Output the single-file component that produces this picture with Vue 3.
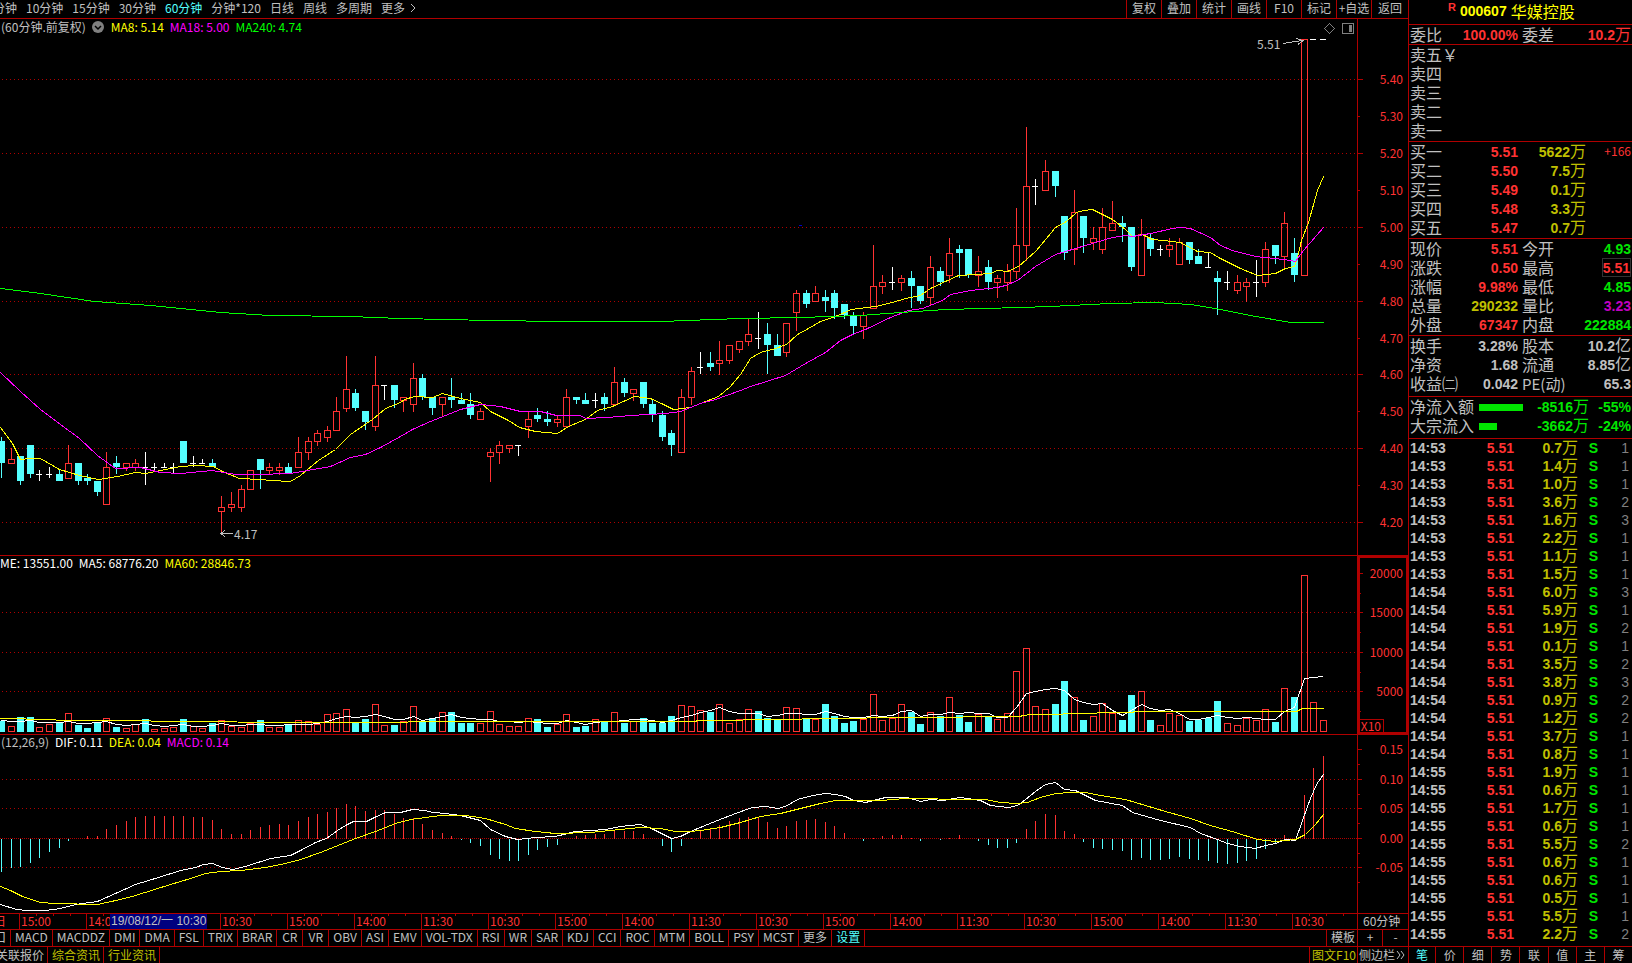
<script setup>
const periods = ['分钟', '10分钟', '15分钟', '30分钟', '60分钟', '分钟*120', '日线', '周线', '多周期']
const tools = ['复权', '叠加', '统计', '画线', 'F10', '标记', '+自选', '返回']
const indicators = ['MACD', 'MACDDZ', 'DMI', 'DMA', 'FSL', 'TRIX', 'BRAR', 'CR', 'VR', 'OBV', 'ASI', 'EMV', 'VOL-TDX', 'RSI', 'WR', 'SAR', 'KDJ', 'CCI', 'ROC', 'MTM', 'BOLL', 'PSY', 'MCST', '更多', '设置']
const timeCycle = ['15:00', '14:00', '11:30', '10:30']
const times = Array.from({ length: 20 }, (_, i) => timeCycle[i % 4])

// open, close, high, low in cents
const bars = `442 436 443 432|436 437 440 436|438 431 438 430|441 433 441 432|433 433 434 431|433 433 435 432|433 431 434 431|432 436 441 432|436 431 436 430|432 431 433 430|431 428 431 427|425 435 439 425|436 435 438 433|435 436 436 434|435 436 437 434|435 435 439 430|435 435 436 434|435 435 436 435|435 435 436 433|442 436 442 436|436 436 438 435|436 436 437 436|436 435 437 435|423 424 427 417|424 425 428 423|424 429 430 423|429 434 434 429|437 434 437 429|434 435 436 433|434 435 436 433|435 433 436 433|435 439 443 435|439 442 443 437|442 444 445 441|443 445 446 442|445 450 454 445|451 456 465 450|455 451 456 450|450 447 450 445|446 457 465 445|457 457 457 453|457 453 457 451|453 454 454 450|452 459 463 450|459 454 460 453|454 451 454 449|452 454 454 449|454 453 459 451|453 452 455 452|452 449 455 448|448 450 451 448|438 439 440 431|439 441 442 436|440 441 441 439|441 441 441 438|446 448 450 443|449 448 451 447|448 447 450 446|447 448 449 446|446 454 456 446|454 453 454 452|453 452 455 452|453 453 455 451|454 452 455 450|452 458 462 452|458 455 459 454|455 456 456 453|458 452 458 451|452 449 453 447|449 443 450 442|444 441 445 438|439 454 456 439|454 461 462 452|462 462 466 460|463 462 466 461|463 464 469 460|464 468 468 463|467 469 469 466|469 471 475 468|470 470 477 467|471 468 474 460|468 465 471 465|466 474 474 465|477 482 483 472|482 479 483 478|480 482 484 480|481 480 483 477|482 478 483 475|479 476 479 475|476 473 477 471|473 476 477 470|478 484 495 478|484 485 487 482|485 485 489 483|485 486 487 483|486 484 488 478|484 480 484 479|481 489 492 479|488 485 489 484|487 493 497 485|494 493 495 486|494 487 494 486|487 488 492 484|489 485 491 483|485 486 487 481|485 488 490 483|488 495 505 486|495 511 527 491|511 511 513 506|510 515 518 510|515 511 515 508|503 493 503 491|494 504 510 490|503 497 503 493|496 497 500 494|494 500 505 493|499 501 507 499|501 500 503 496|500 489 500 488|487 498 502 487|497 494 498 492|494 494 495 492|494 495 497 492|490 496 497 490|496 491 496 490|492 490 494 490|489 489 493 489|486 485 488 476|485 485 488 483|483 485 487 482|484 485 486 480|485 485 491 481|485 494 496 484|495 492 495 490|492 501 504 489|493 487 497 485|487 551 551 487|551 551 551 551|551 551 551 551`
  .split('|').map(row => row.split(' ').map(Number))

// volume in hundreds of lots
const volumes = [14, 7, 19, 19, 6, 10, 11, 24, 9, 5, 12, 18, 6, 5, 10, 17, 4, 5, 6, 17, 8, 5, 11, 15, 7, 6, 11, 15, 6, 6, 10, 15, 14, 10, 23, 24, 29, 11, 17, 36, 9, 9, 14, 33, 14, 18, 25, 25, 11, 11, 11, 27, 10, 8, 8, 18, 17, 6, 10, 23, 6, 8, 17, 13, 25, 11, 14, 18, 11, 11, 20, 34, 33, 28, 26, 36, 11, 17, 29, 27, 18, 15, 32, 31, 18, 16, 36, 20, 11, 14, 16, 48, 15, 18, 36, 25, 10, 25, 20, 45, 22, 13, 23, 20, 16, 24, 78, 107, 33, 29, 36, 65, 45, 15, 20, 37, 24, 15, 47, 52, 15, 9, 24, 22, 14, 15, 18, 39, 11, 9, 18, 15, 29, 13, 56, 45, 200, 38, 15]
const flatFalling = [15, 79, 126]

// histogram heights
const hist = [-33, -29, -28, -24, -19, -13, -9, -2, 0, 3, 3, 10, 14, 18, 22, 23, 23, 23, 23, 23, 22, 22, 19, 10, 5, 5, 9, 12, 14, 15, 14, 18, 22, 25, 27, 31, 35, 33, 28, 29, 29, 25, 21, 21, 15, 9, 6, 3, -1, -4, -7, -16, -20, -22, -22, -16, -11, -8, -6, 0, 3, 4, 5, 5, 8, 8, 8, 5, 0, -7, -13, -7, 1, 8, 11, 14, 18, 21, 22, 21, 17, 11, 13, 18, 19, 20, 17, 13, 6, 0, -2, 1, 3, 4, 4, 1, -2, 0, -1, 1, 4, 0, -2, -6, -9, -9, -4, 10, 18, 25, 24, 8, 5, -3, -9, -10, -11, -12, -21, -19, -21, -21, -20, -18, -20, -21, -22, -24, -25, -24, -22, -20, -10, -4, 4, 0, 44, 71, 83]

const barX = i => Math.floor(1.6 + 9.577 * i)
const priceY = p => Math.floor(227.3 - (p - 500) * 3.69)

const candles = bars.map(([o, c, h, l], i) => {
  const x = barX(i)
  return {
    x,
    kind: c > o ? 'up' : c < o ? 'down' : 'flat',
    top: priceY(Math.max(o, c)),
    bottom: priceY(Math.min(o, c)),
    high: priceY(h),
    low: priceY(l)
  }
})

const volumeBars = volumes.map((v, i) => {
  const height = Math.round(v * 0.786)
  const down = bars[i][1] < bars[i][0] || flatFalling.includes(i)
  return { x: barX(i), y: 732 - height, height, down }
})

const history = [18, 16, 14, 16, ...volumes]
const volumeAverage = volumes.map((_, i) => {
  const sum = history.slice(i, i + 5).reduce((a, b) => a + b, 0)
  return `${barX(i)},${Math.round(732 - (sum / 5) * 0.786)}`
}).join(' ')

const ma8 = '0,427 12,443 20,459 30,458 40,458 59,469 79,475 98,479 117,476 135,472 145,473 165,469 180,466 195,465 213,466 222,471 239,478 260,479 270,480 290,481 300,475 318,460 335,449 350,434 372,419 385,408 400,402 404,399 414,396 432,397 442,393 460,398 480,402 490,411 508,420 519,427 535,431 557,433 568,426 585,419 597,410 612,406 634,396 650,398 663,404 673,409 690,407 700,403 718,396 730,386 740,374 750,358 760,352 775,348 786,344 797,334 808,328 820,321 835,316 851,309 875,306 892,302 905,298 920,295 930,288 945,281 958,275 975,274 990,273 997,270 1007,271 1018,266 1035,251 1046,238 1055,227 1066,221 1076,212 1083,210 1092,209 1098,212 1112,219 1125,229 1132,236 1142,234 1152,239 1163,240 1180,242 1197,251 1210,252 1218,257 1240,268 1257,275 1275,273 1285,268 1294,266 1297,257 1301,240 1308,222 1317,190 1323,176'
const ma18 = '0,372 20,391 40,409 60,424 79,438 97,455 115,468 140,467 160,472 180,473 212,470 235,474 255,474 290,473 307,470 330,466 350,457 365,454 380,447 400,436 412,429 430,421 460,409 480,404 500,406 520,411 540,411 556,415 580,415 585,418 607,417 630,415 665,413 680,411 700,403 715,399 740,390 750,386 785,375 805,363 825,352 840,340 852,334 865,329 890,317 908,310 922,308 942,300 950,294 970,290 997,287 1005,285 1017,280 1035,266 1055,254 1075,248 1112,237 1125,235 1132,236 1150,233 1172,228 1180,227 1190,228 1210,237 1220,245 1232,250 1255,256 1283,259 1290,260 1295,261 1303,250 1323,227'
const ma240 = '0,288 40,293 94,301 150,305 220,312 270,315 350,316 400,318 490,320 560,321 660,321 740,318 800,317 860,315 900,312 945,309 1020,307 1050,306 1110,303 1155,302 1190,304 1220,309 1250,315 1290,322 1323,322'
const volumeLong = '0,718 50,719 60,720 149,720 152,721 320,722 405,722 410,721 695,721 697,720 740,720 745,719 800,719 803,718 865,718 868,717 960,717 965,716 1018,716 1030,714 1060,714 1065,713 1095,713 1098,712 1130,712 1136,711 1296,711 1302,708 1323,708'
const dif = '0,904 16,909 27,910 45,910 60,908 75,904 97,901 115,893 135,884 158,877 180,870 195,867 203,864 212,863 222,867 232,869 245,866 270,858 290,855 300,850 315,842 326,838 337,830 345,825 353,821 366,821 374,817 385,812 400,812 412,809 424,810 433,812 445,813 460,815 480,820 490,829 505,836 517,839 535,837 555,836 575,831 605,829 620,826 640,824 653,829 663,834 671,838 680,836 690,831 712,822 735,813 752,807 765,806 778,808 787,805 797,799 812,795 825,793 835,794 845,796 853,800 865,802 885,797 907,797 920,801 930,799 942,800 960,797 980,800 990,805 1008,807 1017,805 1025,799 1035,791 1045,784 1055,782 1064,789 1075,790 1095,800 1122,805 1132,812 1160,820 1190,827 1200,833 1217,839 1227,843 1240,846 1255,848 1265,845 1275,843 1285,839 1295,840 1302,820 1310,798 1316,784 1323,774'
const dea = '0,886 10,890 22,896 40,902 55,903 97,904 120,899 135,895 170,884 190,878 205,873 220,871 240,870 265,867 285,863 300,859 320,852 340,844 355,838 375,831 395,823 410,819 425,817 440,815 465,815 485,818 505,824 515,828 535,831 555,833 590,832 620,829 640,827 660,828 675,831 690,831 700,830 720,827 740,822 760,816 780,813 800,808 820,803 835,800 880,800 905,798 970,799 985,799 1000,802 1017,803 1027,802 1040,797 1055,793 1070,792 1085,792 1100,795 1125,799 1145,805 1165,811 1190,818 1210,825 1235,832 1257,839 1275,841 1295,839 1305,834 1315,824 1323,814'

const priceTicks = Array.from({ length: 13 }, (_, i) => {
  const p = 540 - i * 10
  return { y: priceY(p), label: (p / 100).toFixed(2), major: i % 2 === 0 }
})
const volumeTicks = [[573, '20000'], [612, '15000'], [652, '10000'], [691, '5000']]
const macdTicks = [[749, '0.15'], [779, '0.10'], [808, '0.05'], [838, '0.00'], [867, '-0.05']]

const sells = ['五', '四', '三', '二', '一']
const buys = [
  ['一', '5.51', '5622', '+166'],
  ['二', '5.50', '7.5', ''],
  ['三', '5.49', '0.1', ''],
  ['四', '5.48', '3.3', ''],
  ['五', '5.47', '0.7', '']
]
const quotes = [
  ['现价', '5.51', 'red', '今开', '4.93', 'green'],
  ['涨跌', '0.50', 'red', '最高', '5.51', 'red boxed'],
  ['涨幅', '9.98%', 'red', '最低', '4.85', 'green'],
  ['总量', '290232', 'gold', '量比', '3.23', 'purple'],
  ['外盘', '67347', 'red', '内盘', '222884', 'green']
]
const facts = [
  ['换手', '3.28%', '股本', '10.2', '亿'],
  ['净资', '1.68', '流通', '8.85', '亿'],
  ['收益㈡', '0.042', 'PE(动)', '65.3', '']
]
const flows = [
  ['净流入额', 44, '-8516', '-55%'],
  ['大宗流入', 18, '-3662', '-24%']
]
const trades = '53 0.7 1,53 1.4 1,53 1.0 1,53 3.6 2,53 1.6 3,53 2.2 1,53 1.1 1,53 1.5 1,54 6.0 3,54 5.9 1,54 1.9 2,54 0.1 1,54 3.5 2,54 3.8 3,54 0.9 2,54 1.2 2,54 3.7 1,54 0.8 1,55 1.9 1,55 0.6 1,55 1.7 1,55 0.6 1,55 5.5 2,55 0.6 1,55 0.6 1,55 0.5 1,55 5.5 1,55 2.2 2'
  .split(',').map(t => t.split(' '))
const sideTabs = ['笔', '价', '细', '势', '联', '值', '主', '筹']
</script>

<template>
  <div class="terminal">
    <main class="board">
      <nav class="toolbar">
        <div class="periods">
          <button v-for="p in periods" :key="p" :class="{ active: p === '60分钟' }">{{ p }}</button>
          <button class="more">更多<svg width="6" height="10" viewBox="0 0 6 10"><path d="M1 1l4 4-4 4" fill="none" stroke="currentColor" /></svg></button>
        </div>
        <div class="tools">
          <button v-for="t in tools" :key="t">{{ t }}</button>
        </div>
      </nav>

      <section class="panel">
        <svg class="plot" viewBox="0 19 1357 536" preserveAspectRatio="none">
          <line v-for="t in priceTicks.filter(t => t.major)" :key="t.y" class="grid-line" x1="2" :y1="t.y + 0.5" x2="1357" :y2="t.y + 0.5" />
          <rect x="799" y="225" width="3" height="1" fill="#0000c8" />
          <g v-for="(c, i) in candles" :key="i" :class="c.kind">
            <template v-if="c.kind === 'up'">
              <rect :x="c.x - 2.5" :y="c.top + 0.5" width="6" :height="c.bottom - c.top" />
              <path :d="`M${c.x + 0.5} ${c.high}V${c.top}M${c.x + 0.5} ${c.bottom}V${c.low + 1}`" />
            </template>
            <template v-else-if="c.kind === 'down'">
              <rect :x="c.x - 3" :y="c.top" width="7" :height="c.bottom - c.top" />
              <path :d="`M${c.x + 0.5} ${c.high}V${c.low}`" />
            </template>
            <path v-else :d="`M${c.x - 3} ${c.top + 0.5}h6M${c.x + 0.5} ${c.high}V${c.low}`" />
          </g>
          <g transform="translate(0.5 0.5)">
            <polyline :points="ma8" stroke="#ffff00" />
            <polyline :points="ma18" stroke="#ff00ff" />
            <polyline :points="ma240" stroke="#00ff00" />
          </g>
          <path d="M1283 43.500L1302 40.500M1296 38.500L1303 40.500L1298 44.500" stroke="#c0c0c0" fill="none" />
          <path d="M221 533.500H233M225 530.500L221 533.500L225 536.500" stroke="#c0c0c0" fill="none" />
          <text x="1257" y="49">5.51</text>
          <text x="234" y="539">4.17</text>
          <path d="M1329.500 23.500l5 5-5 5-5-5z" stroke="#808080" fill="none" />
          <rect x="1342.500" y="23.500" width="11" height="10" rx="1" stroke="#808080" fill="none" />
          <rect x="1349" y="25" width="3" height="7" fill="#808080" />
        </svg>
        <svg class="axis" viewBox="0 19 50 536">
          <g v-for="t in priceTicks" :key="t.label">
            <path :d="`M0 ${t.y + 0.5}h${t.major ? 5 : 2}`" />
            <text x="45" :y="t.y + 5">{{ t.label }}</text>
          </g>
        </svg>
        <header class="legend">
          <span>(60分钟.前复权)</span>
          <svg class="fold" width="12" height="12" viewBox="0 0 12 12"><circle cx="6" cy="6" r="6" fill="#808080" /><path d="M3 5l3 3 3-3" fill="none" stroke="#000" stroke-width="1.500" /></svg>
          <span class="bright-yellow">MA8: 5.14</span>
          <span class="magenta">MA18: 5.00</span>
          <span class="lime">MA240: 4.74</span>
        </header>
      </section>

      <section class="panel">
        <svg class="plot" viewBox="0 556 1357 178" preserveAspectRatio="none">
          <line v-for="t in volumeTicks.slice(1)" :key="t[0]" class="grid-line" x1="2" :y1="t[0] + 0.5" x2="1357" :y2="t[0] + 0.5" />
          <g v-for="(v, i) in volumeBars" :key="i" :class="v.down ? 'down' : 'up'">
            <rect v-if="v.down" :x="v.x - 3" :y="v.y" width="7" :height="v.height" />
            <rect v-else :x="v.x - 2.5" :y="v.y + 0.5" width="6" :height="v.height - 1" />
          </g>
          <g transform="translate(0.5 0.5)">
            <polyline :points="volumeAverage" stroke="#ffffff" />
            <polyline :points="volumeLong" stroke="#ffff00" />
          </g>
        </svg>
        <svg class="axis" viewBox="0 556 50 178">
          <rect class="frame" x="1" y="557" width="48" height="176" />
          <g v-for="t in volumeTicks" :key="t[1]">
            <path :d="`M0 ${t[0] + 0.5}h5M0 ${t[0] + 20.5}h3`" />
            <text x="45" :y="t[0] + 5">{{ t[1] }}</text>
          </g>
          <path d="M0 719.500H25.500V732" />
          <text x="23" y="731">X10</text>
        </svg>
        <header class="legend compact">
          <span class="white">ME: 13551.00</span>
          <span class="white">MA5: 68776.20</span>
          <span class="bright-yellow">MA60: 28846.73</span>
        </header>
      </section>

      <section class="panel">
        <svg class="plot" viewBox="0 735 1357 178" preserveAspectRatio="none">
          <line v-for="y in [779, 808, 867]" :key="y" class="grid-line" x1="2" :y1="y + 0.5" x2="1357" :y2="y + 0.5" />
          <line class="zero-line" x1="0" y1="838.500" x2="1357" y2="838.500" />
          <template v-for="(h, i) in hist" :key="i">
            <path v-if="h" :d="`M${barX(i) + 0.5} 838.5V${838.5 - h}`" :stroke="h > 0 ? '#ff3232' : '#54ffff'" />
          </template>
          <g transform="translate(0.5 0.5)">
            <polyline :points="dif" stroke="#ffffff" />
            <polyline :points="dea" stroke="#ffff00" />
          </g>
        </svg>
        <svg class="axis" viewBox="0 735 50 178">
          <g v-for="t in macdTicks" :key="t[1]">
            <path :d="`M0 ${t[0] + 0.5}h4M0 ${t[0] + 15.5}h2`" />
            <text x="45" :y="t[0] + 5">{{ t[1] }}</text>
          </g>
        </svg>
        <header class="legend compact">
          <span>(12,26,9)</span>
          <span class="white">DIF: 0.11</span>
          <span class="bright-yellow">DEA: 0.04</span>
          <span class="magenta">MACD: 0.14</span>
        </header>
      </section>

      <section class="timeline">
        <div class="times">
          <span class="clipped">日</span>
          <span v-for="(t, i) in times" :key="i" class="stamp">{{ t }}</span>
          <span class="cursor-time">19/08/12/一 10:30</span>
        </div>
        <div class="axis-cell">60分钟</div>
      </section>

      <nav class="indicators">
        <button class="cut">窗口</button>
        <button v-for="n in indicators" :key="n" :class="{ active: n === '设置' }">{{ n }}</button>
        <i class="spacer"></i>
        <button class="template">模板</button>
        <button class="zoom">+</button>
        <button class="zoom">-</button>
      </nav>

      <nav class="links">
        <a href="#" class="cut">关联报价</a>
        <a href="#" class="gold">综合资讯</a>
        <a href="#" class="gold">行业资讯</a>
        <i class="spacer"></i>
        <a href="#" class="gold f10">图文F10</a>
        <a href="#" class="axis-cell">侧边栏<svg width="9" height="10" viewBox="0 0 9 10"><path d="M1 1l3 4-3 4M5 1l3 4-3 4" fill="none" stroke="currentColor" /></svg></a>
      </nav>
    </main>

    <aside class="side">
      <h1 class="title"><sup>R</sup><b>000607</b><span>华媒控股</span></h1>
      <div class="block">
        <div class="pair">
          <span class="field">委比<b class="red">100.00%</b></span>
          <span class="field">委差<b class="red">10.2<em>万</em></b></span>
        </div>
      </div>
      <div class="block book">
        <div v-for="s in sells" :key="s" class="level">卖{{ s }}<span v-if="s === '五'">￥</span></div>
      </div>
      <table class="block book">
        <tbody>
          <tr v-for="b in buys" :key="b[0]" class="bid">
            <th>买{{ b[0] }}</th>
            <td class="red">{{ b[1] }}</td>
            <td class="gold">{{ b[2] }}<em>万</em></td>
            <td class="change">{{ b[3] }}</td>
          </tr>
        </tbody>
      </table>
      <div class="block book">
        <div v-for="q in quotes" :key="q[0]" class="pair">
          <span class="field">{{ q[0] }}<b :class="q[2]">{{ q[1] }}</b></span>
          <span class="field">{{ q[3] }}<b :class="q[5]">{{ q[4] }}</b></span>
        </div>
      </div>
      <div class="block facts">
        <div v-for="q in facts" :key="q[0]" class="pair">
          <span class="field">{{ q[0] }}<b>{{ q[1] }}</b></span>
          <span class="field" :class="{ ratio: !q[4] }">{{ q[2] }}<b>{{ q[3] }}<em v-if="q[4]">{{ q[4] }}</em></b></span>
        </div>
      </div>
      <div class="block flows">
        <div v-for="f in flows" :key="f[0]" class="flow">
          <span>{{ f[0] }}</span>
          <i class="meter" :style="{ width: f[1] + 'px' }"></i>
          <b class="green">{{ f[2] }}<em>万</em></b>
          <b class="green">{{ f[3] }}</b>
        </div>
      </div>
      <table class="trades">
        <tbody>
          <tr v-for="(t, i) in trades" :key="i">
            <td>14:{{ t[0] }}</td>
            <td class="red">5.51</td>
            <td class="gold">{{ t[1] }}<em>万</em></td>
            <td class="sell">S</td>
            <td class="count">{{ t[2] }}</td>
          </tr>
        </tbody>
      </table>
      <nav class="tabs">
        <button v-for="t in sideTabs" :key="t" :class="{ active: t === '笔' }">{{ t }}</button>
      </nav>
    </aside>
  </div>
</template>

<style>
body {
  margin: 0;
  background: #000;
}
</style>

<style scoped>
.terminal {
  --line: #b00000;
  display: grid;
  grid-template-columns: minmax(0, 1fr) 224px;
  height: 100vh;
  overflow: hidden;
  background: #000;
  color: #c0c0c0;
  font: 12px/16px "Noto Sans CJK SC", sans-serif;
  white-space: nowrap;
}
button {
  padding: 0;
  border: 0;
  background: none;
  color: inherit;
  font: inherit;
}
a {
  color: inherit;
  text-decoration: none;
}
em,
i {
  font-style: normal;
}
.board {
  display: grid;
  grid-template-rows: 19px minmax(0, 537fr) minmax(0, 179fr) minmax(0, 179fr) 16px 17px 16px;
  min-width: 0;
}
.toolbar,
.panel,
.timeline,
.indicators {
  box-sizing: border-box;
  border-bottom: 1px solid var(--line);
}
.toolbar {
  display: flex;
  justify-content: space-between;
}
.toolbar button {
  padding-bottom: 3px;
  line-height: 15px;
}
.periods {
  display: flex;
  gap: 9px;
  margin-left: -7px;
}
.more {
  display: flex;
  align-items: center;
  gap: 5px;
}
.tools {
  display: flex;
}
.tools button {
  box-sizing: border-box;
  width: 35px;
  border-left: 1px solid var(--line);
}
.tools button:last-child {
  width: 37px;
}
.active {
  color: #54ffff;
}
.panel {
  position: relative;
  display: grid;
  grid-template-columns: minmax(0, 1fr) 51px;
  grid-template-rows: minmax(0, 1fr);
}
.plot,
.axis {
  display: block;
  box-sizing: border-box;
  width: 100%;
  height: 100%;
  shape-rendering: crispEdges;
}
.axis {
  border-left: 1px solid var(--line);
}
.plot polyline {
  fill: none;
}
.plot text {
  fill: #c0c0c0;
}
.axis text {
  fill: #ff3232;
  text-anchor: end;
}
.axis path {
  fill: none;
  stroke: var(--line);
}
.frame {
  fill: none;
  stroke: var(--line);
  stroke-width: 2;
}
.grid-line {
  stroke: var(--line);
  stroke-dasharray: 1 3;
}
.zero-line {
  stroke: var(--line);
  stroke-dasharray: 1 1;
}
.up {
  fill: none;
  stroke: #ff3232;
}
.down rect {
  fill: #54ffff;
}
.down path {
  stroke: #54ffff;
}
.flat {
  stroke: #fff;
}
.legend {
  position: absolute;
  top: 0;
  left: 0;
  display: flex;
  gap: 6px;
  align-items: center;
}
.compact {
  line-height: 14px;
}
.legend > :first-child:not(.white) {
  padding-left: 1px;
}
.fold {
  margin-right: 1px;
}
.white { color: #fff; }
.bright-yellow { color: #ff0; }
.magenta { color: #f0f; }
.lime { color: #0f0; }
.red { color: #ff3232; }
.gold { color: #c0c000; }
.green { color: #00e600; }
.purple { color: #c000c0; }
.timeline {
  display: grid;
  grid-template-columns: minmax(0, 1fr) 51px;
  line-height: 14px;
}
.times {
  position: relative;
  display: grid;
  grid-template-columns: 19fr repeat(19, 67fr) 65fr;
  color: #ff3232;
}
.clipped {
  display: flex;
  justify-content: flex-end;
  width: 6px;
  overflow: hidden;
}
.stamp {
  min-width: 0;
  padding-left: 1px;
  border-left: 1px solid var(--line);
  background: repeating-linear-gradient(90deg, transparent 0 16px, var(--line) 16px 17px) 0 0 / 51px 2px no-repeat;
}
.cursor-time {
  position: absolute;
  top: 0;
  left: 110px;
  padding: 0 1px;
  background: #000080;
  color: #c0c0c0;
  font: 12px/15px "Liberation Sans", "Noto Sans CJK SC", sans-serif;
}
.axis-cell {
  box-sizing: border-box;
  width: 51px;
  border-left: 1px solid var(--line);
  padding-left: 5px;
}
.indicators,
.links {
  display: flex;
}
.indicators button {
  box-sizing: border-box;
  min-width: 26px;
  padding: 0 4px 2px;
  border-right: 1px solid var(--line);
  line-height: 14px;
}
.indicators .cut {
  display: flex;
  justify-content: flex-end;
  min-width: 0;
  width: 11px;
  overflow: hidden;
}
.spacer {
  flex: 1;
  border-right: 1px solid var(--line);
}
.indicators .template {
  padding: 0 2px 2px 4px;
}
.indicators .zoom {
  width: 25px;
  min-width: 0;
}
.indicators .zoom:last-child {
  border-right: 0;
}
.links a {
  padding: 0 3px 0 4px;
  border-right: 1px solid var(--line);
}
.links .cut {
  margin-left: -8px;
}
.links .f10 {
  padding: 0 1px 0 2px;
  border-right: 0;
}
.links .axis-cell {
  display: flex;
  align-items: center;
  gap: 1px;
  padding: 0 0 0 1px;
  border-right: 0;
}
.side {
  display: flex;
  flex-direction: column;
  min-width: 0;
  border-left: 1px solid var(--line);
  font-size: 16px;
  line-height: 19px;
}
.side b,
.side td {
  font: bold 14px/21px "Liberation Sans", "Noto Sans CJK SC", sans-serif;
}
.side em {
  font: 16px/1px "Liberation Sans", "Noto Sans CJK SC", sans-serif;
}
.title {
  display: flex;
  gap: 4px;
  margin: 0;
  padding-left: 39px;
  border-bottom: 1px solid var(--line);
  color: #ff0;
  font-size: 16px;
  font-weight: normal;
  line-height: 24px;
}
.side .title b {
  line-height: 22px;
}
.title span {
  height: 24px;
  line-height: 22px;
}
.title sup {
  color: #ff3232;
  font: bold 11px/15px "Liberation Sans", sans-serif;
}
.block {
  border-bottom: 1px solid var(--line);
}
.book {
  padding-bottom: 1px;
}
.facts,
.flows {
  padding-bottom: 3px;
}
.pair {
  display: grid;
  grid-template-columns: 108px minmax(0, 1fr);
  gap: 4px;
  padding: 0 1px;
}
.field {
  display: flex;
  justify-content: space-between;
  height: 19px;
}
.ratio {
  font-size: 15px;
}
.side .boxed {
  box-sizing: border-box;
  border: 1px solid #333;
  line-height: 18px;
}
.level {
  padding-left: 1px;
}
table {
  display: block;
  border-spacing: 0;
}
tbody {
  display: block;
}
tr {
  display: grid;
}
th,
.side td {
  height: 19px;
  padding: 0;
  text-align: right;
}
th {
  font-weight: normal;
  text-align: left;
}
.bid {
  grid-template-columns: 40px 68px 68px 1fr;
  padding: 0 1px;
}
.side .change {
  color: #ff3232;
  font: 12px/17px "Noto Sans CJK SC", sans-serif;
}
.flow {
  display: grid;
  grid-template-columns: 69px 44px 66px 1fr;
  height: 19px;
  padding: 0 1px;
  text-align: right;
}
.flow span {
  text-align: left;
}
.meter {
  align-self: center;
  height: 7px;
  background: #00e600;
}
.trades {
  flex: 1;
}
.trades tr {
  grid-template-columns: 40px 64px 64px 20px 1fr;
  height: 18px;
  padding: 0 3px 0 1px;
}
.side .trades td {
  height: 18px;
  line-height: 18px;
}
.side .trades td:first-child {
  text-align: left;
}
.side .trades .sell {
  color: #00e600;
}
.side .trades .count {
  color: #808080;
  font-weight: normal;
}
.tabs {
  display: grid;
  grid-template-columns: 26fr repeat(7, 28fr);
  border-top: 1px solid var(--line);
  font-size: 12px;
  line-height: 16px;
}
.tabs button + button {
  border-left: 1px solid var(--line);
}
</style>
